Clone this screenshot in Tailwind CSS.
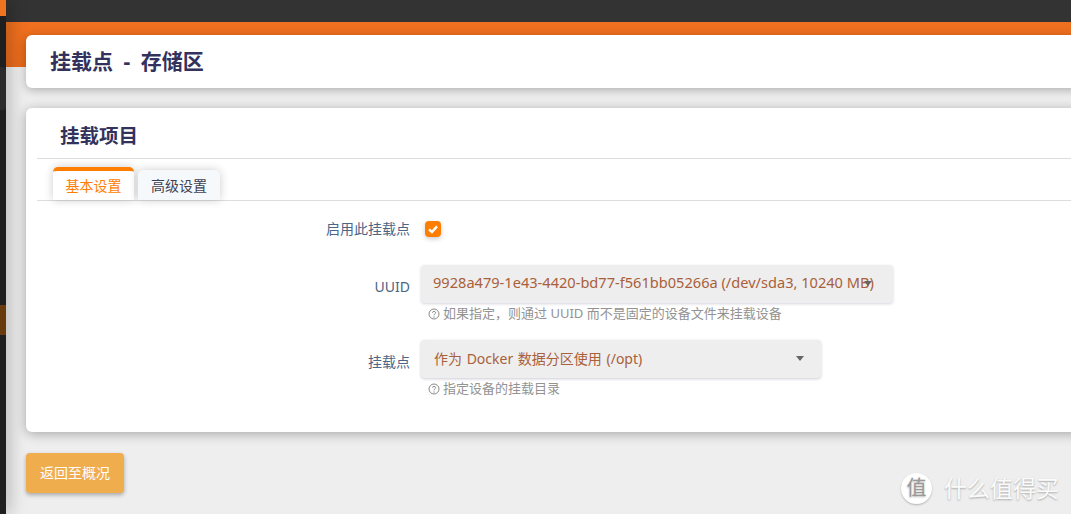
<!DOCTYPE html>
<html lang="zh">
<head>
<meta charset="utf-8">
<script src="https://cdn.jsdelivr.net/npm/@tailwindcss/browser@4"></script>
</head>
<body class="m-0 overflow-hidden bg-[#eeeeee] font-['Noto_Sans','Noto_Sans_CJK_SC',sans-serif]">
<div class="relative flex h-[514px] w-[1071px] overflow-hidden">
  <aside class="relative z-10 flex w-[6px] shrink-0 flex-col bg-[#1f1f1f] shadow-[0_0_18px_rgba(0,0,0,0.55)]">
    <div class="h-[16px] bg-[#ee7420]"></div>
    <div class="mt-[51px] h-[43px] rounded-r-[4px] bg-[#2b2b2b]"></div>
    <div class="mt-[195px] h-[30px] bg-[#693a0c]"></div>
  </aside>
  <main class="flex min-w-0 flex-1 flex-col">
    <div class="h-[22px] shrink-0 bg-[#333333]"></div>
    <div class="flex flex-1 flex-col bg-[linear-gradient(to_bottom,#f0701f_0,#e96a1c_45px,#eeeeee_45px)] pl-[20px] pt-[13px]">
      <div class="flex h-[53px] w-[1060px] shrink-0 items-center rounded-[6px] bg-white pl-[24px] shadow-[0_2px_10px_rgba(0,0,0,0.28)]">
        <h2 class="text-[21px] font-bold [word-spacing:5px] text-[#32325d]">挂载点 - 存储区</h2>
      </div>
      <section class="mt-[20px] h-[324px] w-[1060px] shrink-0 rounded-[6px] bg-white pl-[11px] shadow-[0_2px_12px_rgba(0,0,0,0.3)]">
        <h3 class="flex h-[51px] items-center border-b border-[#dddddd] pl-[23px] pt-[6px] text-[19.5px] font-bold text-[#32325d]">挂载项目</h3>
        <div class="flex h-[42px] items-end gap-[4px] border-b border-[#dddddd] pl-[16px]">
          <div class="flex h-[33px] w-[81px] items-center justify-center rounded-t-[5px] border-t-[4px] border-[#ff7d00] bg-white text-[14px] text-[#ff7d00] shadow-[0_0_10px_rgba(0,0,0,0.2)]">基本设置</div>
          <div class="flex h-[30px] w-[82px] items-center justify-center rounded-t-[5px] bg-[#f6f9fc] text-[14px] text-[#404050] shadow-[0_0_10px_rgba(0,0,0,0.2)]">高级设置</div>
        </div>
        <div class="mt-[16px] flex h-[24px] items-center">
          <label class="w-[373px] pb-[2px] text-right text-[14px] text-[#4a6585]">启用此挂载点</label>
          <span class="ml-[15px] flex size-[16px] items-center justify-center rounded-[4px] bg-[#ff7d00] shadow-[0_2px_5px_rgba(0,0,0,0.2)]">
            <svg viewBox="0 0 16 16" class="size-[16px]"><path d="M4 8.4 6.9 11 12 5.4" fill="none" stroke="#fff" stroke-width="2.4"/></svg>
          </span>
        </div>
        <div class="mt-[24px] flex">
          <label class="w-[373px] pt-[11px] text-right text-[14px] text-[#4a6585]">UUID</label>
          <div class="ml-[11px]">
            <div class="relative flex h-[38px] w-[472px] items-center overflow-hidden whitespace-nowrap rounded-[4px] bg-[#eeeeee] pb-[2px] pl-[12px] text-[14.6px] text-[#a9603a] shadow-[0_1px_3px_rgba(50,50,93,0.2)]">9928a479-1e43-4420-bd77-f561bb05266a (/dev/sda3, 10240 MB)
              <span class="absolute left-[443px] top-[16px] size-0 border-x-[4px] border-t-[5px] border-x-transparent border-t-[#666666]"></span>
            </div>
            <p class="ml-[7px] mt-[2px] flex h-[17px] items-center gap-[3px] text-[13px] text-[#939393]"><svg viewBox="0 0 12 12" class="size-[12px]"><circle cx="6" cy="6" r="5" fill="none" stroke="#8a8a8a"/><path d="M4.4 4.7C4.4 3 7.6 3 7.6 4.7 7.6 5.9 6 5.7 6 7.3" fill="none" stroke="#8a8a8a"/><circle cx="6" cy="9" r=".7" fill="#8a8a8a"/></svg>如果指定，则通过 UUID 而不是固定的设备文件来挂载设备</p>
          </div>
        </div>
        <div class="mt-[18px] flex">
          <label class="w-[373px] pt-[11px] text-right text-[14px] text-[#4a6585]">挂载点</label>
          <div class="ml-[11px]">
            <div class="relative flex h-[38px] w-[400px] items-center rounded-[4px] bg-[#eeeeee] pb-[2px] pl-[13px] text-[14px] [word-spacing:1px] text-[#a9603a] shadow-[0_1px_3px_rgba(50,50,93,0.25)]">作为 Docker 数据分区使用 (/opt)
              <span class="absolute right-[17px] top-[16px] size-0 border-x-[4.5px] border-t-[5px] border-x-transparent border-t-[#666666]"></span>
            </div>
            <p class="ml-[7px] mt-[2px] flex h-[17px] items-center gap-[3px] text-[13px] text-[#939393]"><svg viewBox="0 0 12 12" class="size-[12px]"><circle cx="6" cy="6" r="5" fill="none" stroke="#8a8a8a"/><path d="M4.4 4.7C4.4 3 7.6 3 7.6 4.7 7.6 5.9 6 5.7 6 7.3" fill="none" stroke="#8a8a8a"/><circle cx="6" cy="9" r=".7" fill="#8a8a8a"/></svg>指定设备的挂载目录</p>
          </div>
        </div>
      </section>
      <button class="mt-[21px] flex h-[40px] w-[98px] shrink-0 items-center justify-center rounded-[4px] bg-[#f0ad4e] pb-[2px] text-[14px] text-white shadow-[0_2px_4px_rgba(0,0,0,0.3)]">返回至概况</button>
    </div>
  </main>
  <div class="absolute left-[901px] top-[472px] flex items-center gap-[12px] text-[#fbfbfb] [text-shadow:0_1px_2px_rgba(0,0,0,0.3)]">
    <span class="flex size-[31px] items-center justify-center rounded-full bg-white text-[20px] text-[#999999] shadow-[0_1px_2px_rgba(0,0,0,0.25)]">值</span>
    <span class="text-[23px] leading-[32px]">什么值得买</span>
  </div>
</div>
</body>
</html>
